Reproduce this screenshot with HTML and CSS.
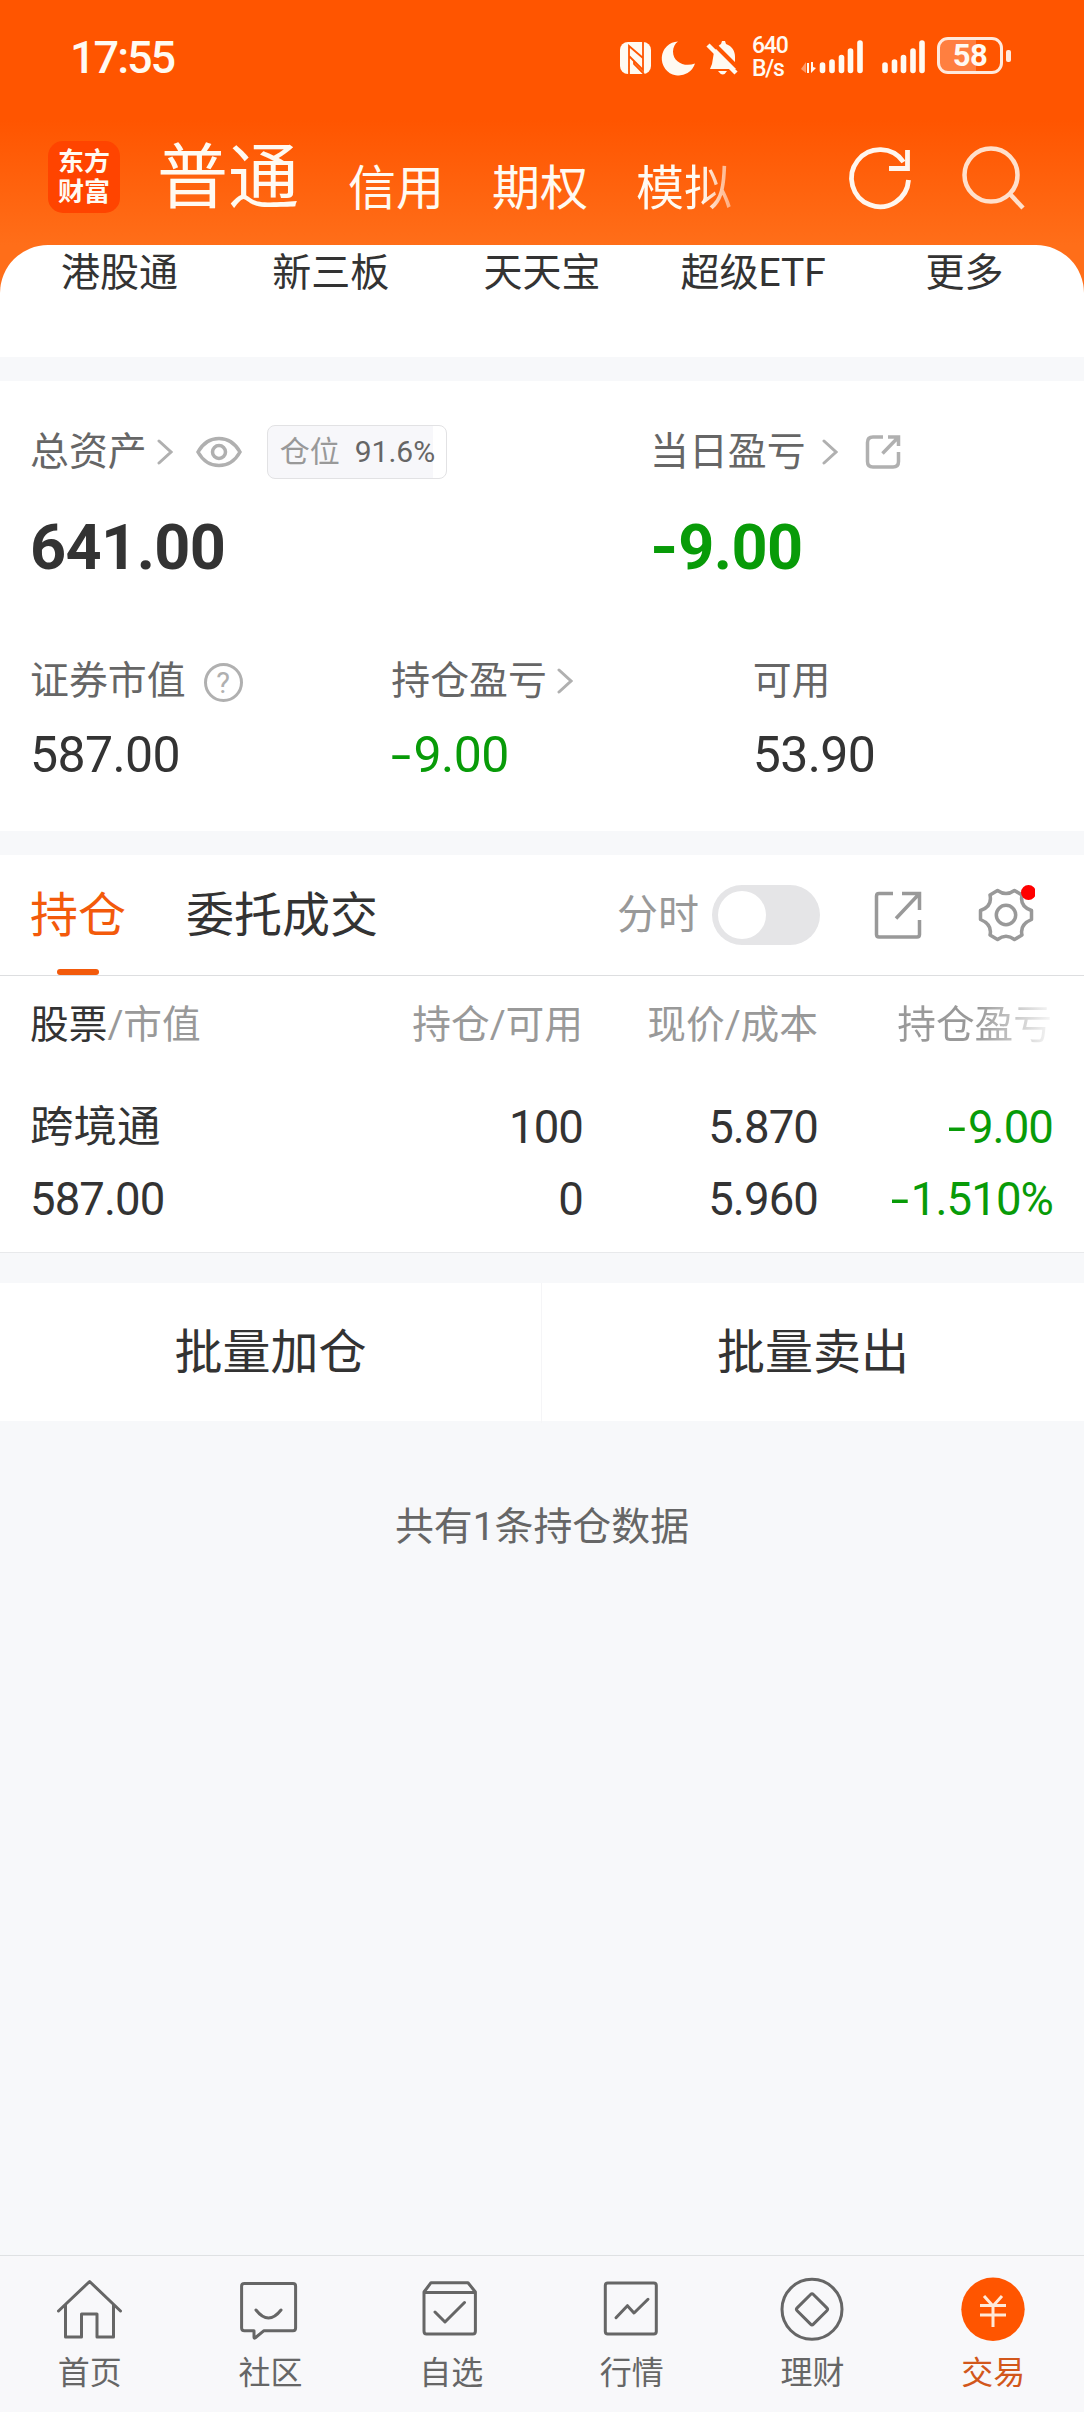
FILE: index.html
```html
<!DOCTYPE html>
<html lang="zh-CN">
<head>
    <meta charset="UTF-8">
    <meta name="viewport" content="width=device-width, initial-scale=1.0">
    <title>交易</title>
    <link rel="stylesheet" href="styles.css">
</head>
<body>

    <div class="top">
        <!-- Status bar -->
        <div class="status-bar">
            <span class="time">17:55</span>
            <svg class="status-icons" width="128" height="44" viewBox="616 34 128 44">
                <rect x="620" y="41" width="31" height="32" rx="8" fill="#fffaf2"/>
                <path d="M629 73V45l14 12M643 41v28L629 55M634 60v3l10 10" fill="none" stroke="#ff5500" stroke-width="1.8"/>
                <path d="M678 40.500a17 17 0 1 0 17 22c-10 4-22-1-22-12 0-4 2-8 5-10z" fill="#fffaf2"/>
                <path d="M714 51c3-5 5-7 7-8l1-3h3l1 3c6 2 9 7 9 13v8l2 4h-27l2-5z" fill="#fffaf2"/>
                <path d="M718 70h9q-4 7-9 0z" fill="#fffaf2"/>
                <path d="M712 41l27 27" stroke="#ff5500" stroke-width="4"/>
                <path d="M708 44l28 28" stroke="#fffaf2" stroke-width="4.500"/>
            </svg>
            <span class="net-speed"><span>640</span><span>B/s</span></span>
            <svg class="signal" width="130" height="44" viewBox="798 34 130 44">
                <path d="M801 68l5-7v11" fill="#ff9a68"/>
                <path d="M809 62v10h-2V62zM811 61v11l5-5-3-1v-5z" fill="#fffaf2"/>
                <g stroke="#fffaf2" stroke-width="5.600" stroke-linecap="round">
                    <path d="M822.500 64v5.500M832 61v8.500M841.500 56.500v13M850.500 50v19.500M860 42v27.500"/>
                    <path d="M885 64v5.500M894.500 61v8.500M903.500 56.500v13M913 50v19.500M922 42v27.500"/>
                </g>
            </svg>
            <div class="battery"><span>58</span></div>
        </div>

        <!-- Account tabs -->
        <div class="account-bar">
            <div class="logo">东方<br>财富</div>
            <div class="account-tabs">
                <span class="active">普通</span>
                <span>信用</span>
                <span>期权</span>
                <span class="fade-tab">模拟</span>
            </div>
            <svg class="bar-icons" width="190" height="70" viewBox="846 143 190 70" fill="none">
                <path d="M908.500 179a28.500 28.500 0 1 1-5-18" stroke="#fff6ee" stroke-width="4.800"/>
                <path d="M907.500 149v18.500H889" stroke="#fff6ee" stroke-width="4.800"/>
                <circle cx="991" cy="174" r="26.500" stroke="#ffe0cc" stroke-width="4.500"/>
                <path d="M1009 192l14 15" stroke="#ffe0cc" stroke-width="4.500"/>
            </svg>
        </div>

        <div class="quick-links">
            <span>港股通</span>
            <span>新三板</span>
            <span>天天宝</span>
            <span>超级ETF</span>
            <span>更多</span>
        </div>
    </div>

    <!-- Assets -->
    <div class="assets">
        <div class="totals">
            <div class="total">
                <div class="label">
                    <span>总资产</span>
                    <svg class="chevron" width="16" height="28" viewBox="0 0 16 28"><path d="M2 3l12 11L2 25"/></svg>
                    <svg class="eye" width="46" height="32" viewBox="0 0 46 32"><path d="M2 16C12-2 34-2 44 16 34 34 12 34 2 16z"/><circle cx="23" cy="16" r="6.500"/></svg>
                    <span class="position-tag"><em>仓位</em>91.6%</span>
                </div>
                <div class="big">641.00</div>
            </div>
            <div class="today">
                <div class="label">
                    <span>当日盈亏</span>
                    <svg class="chevron" width="16" height="28" viewBox="0 0 16 28"><path d="M2 3l12 11L2 25"/></svg>
                    <svg class="share" width="36" height="36" viewBox="0 0 36 36"><path d="M18 3H8Q2.500 3 2.500 8.500v19Q2.500 33 8 33h20q5.500 0 5.500-5.500V18M23 3h10.500v9M33 3.500L17.500 19.500"/></svg>
                </div>
                <div class="big green"><span class="minus">-</span>9.00</div>
            </div>
        </div>
        <div class="details">
            <div>
                <div class="label">
                    <span>证券市值</span>
                    <i class="help">?</i>
                </div>
                <div class="value">587.00</div>
            </div>
            <div>
                <div class="label">
                    <span>持仓盈亏</span>
                    <svg class="chevron" width="16" height="28" viewBox="0 0 16 28"><path d="M2 3l12 11L2 25"/></svg>
                </div>
                <div class="value green"><span class="minus">-</span>9.00</div>
            </div>
            <div>
                <div class="label"><span>可用</span></div>
                <div class="value">53.90</div>
            </div>
        </div>
    </div>

    <!-- Holdings -->
    <div class="holdings">
        <div class="tabs">
            <span class="tab active">持仓</span>
            <span class="tab">委托成交</span>
            <span class="switch-label">分时</span>
            <span class="switch"></span>
            <svg class="open-icon" width="48" height="48" viewBox="0 0 48 48"><path d="M19 2.500H5Q2.500 2.500 2.500 5v38.500Q2.500 46 5 46h38q2.500 0 2.500-2.500V29M28 2.500h17.500V19M45 3L22 27.500"/></svg>
            <svg class="gear" width="58" height="60" viewBox="977 884 58 60">
                <path d="M997.500 890.500q8.500 6 17 0l7.500 4.500q-2.500 11.500 9.500 15.500v9q-12 5-9.500 15.500l-7.500 4.500q-8.500-6.500-17 0l-7.500-4.500q2.500-10.500-9.500-15.500v-9q12-4 9.500-15.500z"/>
                <circle cx="1006" cy="915" r="9.700"/>
                <circle class="dot" cx="1028.500" cy="892.500" r="7.500"/>
            </svg>
        </div>
        <div class="row row-head">
            <span><b>股票</b>/市值</span>
            <span>持仓/可用</span>
            <span>现价/成本</span>
            <span class="fade-col">持仓盈亏</span>
        </div>
        <div class="row">
            <span class="name">跨境通</span>
            <span>100</span>
            <span>5.870</span>
            <span class="green"><span class="minus">-</span>9.00</span>
        </div>
        <div class="row">
            <span>587.00</span>
            <span>0</span>
            <span>5.960</span>
            <span class="green"><span class="minus">-</span>1.510%</span>
        </div>
    </div>

    <div class="batch">
        <span>批量加仓</span>
        <span>批量卖出</span>
    </div>

    <div class="note">共有1条持仓数据</div>

    <!-- Bottom navigation -->
    <div class="nav">
        <div class="nav-item">
            <svg width="66" height="66" viewBox="0 0 66 66"><path d="M1.500 35L32.600 5.500 63.500 35M8.500 29v32h16V38H40v23h16.500V29"/></svg>
            首页
        </div>
        <div class="nav-item">
            <svg width="66" height="66" viewBox="0 0 66 66"><path d="M7.500 7.500h48.500q2.600 0 2.600 2.500v42q0 2.700-2.600 2.700H27L18 62q-1 .5-1-1v-6.300H7.500q-2.900 0-2.900-2.700V10q0-2.500 2.900-2.500zM19 34q12.500 16 25 0"/></svg>
            社区
        </div>
        <div class="nav-item">
            <svg width="66" height="66" viewBox="0 0 66 66"><path d="M6 16l7-9.300h37l7.400 9.300v39q0 3-2.500 3H8.500Q6 58 6 55zM6 16.500h51.400M17 36l10 10 19.500-19.500"/></svg>
            自选
        </div>
        <div class="nav-item">
            <svg width="66" height="66" viewBox="0 0 66 66"><rect x="6.300" y="7" width="51" height="51" rx="2.500"/><path d="M17 41.700l11.400-12 6.600 7.300 14-13.700"/></svg>
            行情
        </div>
        <div class="nav-item">
            <svg width="66" height="66" viewBox="0 0 66 66"><circle cx="33" cy="33.300" r="30"/><rect x="21.500" y="21.800" width="23" height="23" rx="2" transform="rotate(45 33 33.300)"/></svg>
            理财
        </div>
        <div class="nav-item active">
            <svg width="66" height="66" viewBox="0 0 66 66"><circle class="coin" cx="33" cy="33.300" r="31.700"/><path class="yen" d="M24 20l9 10 9-10M20 29.500h26M20 39h26M33 29v22"/></svg>
            交易
        </div>
    </div>

</body>
</html>
```

FILE: styles.css
```css
/* General Styles */
* {
    box-sizing: border-box;
}

body {
    display: flex;
    flex-direction: column;
    margin: 0;
    width: 1084px;
    height: 2412px;
    overflow: hidden;
    font-family: Roboto, "Noto Sans CJK SC", sans-serif;
    background: #f7f8fa;
    color: #333;
}

svg {
    flex: none;
    fill: none;
}

/* Top area */
.top {
    height: 357px;
    background: linear-gradient(#ff5500 120px, #ff6e19 245px);
}

.status-bar {
    display: flex;
    align-items: center;
    height: 114px;
    padding-left: 70px;
    color: #fffaf2;
}

.time {
    width: 546px;
    padding-top: 2px;
    font-size: 45px;
    font-weight: 500;
    line-height: 50px;
    letter-spacing: -2px;
}

.net-speed {
    display: flex;
    flex-direction: column;
    width: 54px;
    padding-left: 8px;
    font-size: 23px;
    font-weight: 500;
    line-height: 23px;
    letter-spacing: -1.2px;
}

.battery {
    position: relative;
    width: 66px;
    height: 37px;
    margin: -3px 0 0 9px;
    border: 3px solid #ffe9dc;
    border-radius: 11px;
    background: linear-gradient(90deg, #ff7f40 36px, transparent 36px);
    font-size: 31px;
    font-weight: 700;
    line-height: 32px;
    letter-spacing: -0.5px;
    text-align: center;
}

.battery::after {
    content: "";
    position: absolute;
    right: -11px;
    top: 10px;
    width: 5px;
    height: 12px;
    border-radius: 2px;
    background: #ffe9dc;
}

/* Account bar */
.account-bar {
    display: flex;
    height: 131px;
    padding: 27px 48px 0;
    color: #fffaf2;
}

.logo {
    width: 72px;
    height: 72px;
    padding-top: 6px;
    border-radius: 15px;
    background: #ff4400;
    font-size: 26px;
    font-weight: 700;
    line-height: 30px;
    text-align: center;
}

.account-tabs {
    display: flex;
    align-items: flex-start;
    width: 688px;
    margin-left: 37px;
    font-size: 48px;
    line-height: 72px;
}

.account-tabs span {
    margin-top: 12px;
    margin-right: 48px;
}

.account-tabs .active {
    margin-top: 1px;
    margin-right: 49px;
    font-size: 71px;
}

.fade-tab {
    background: linear-gradient(90deg, #fffaf2 68%, #ffa878 100%);
    background-clip: text;
    color: transparent;
}

.bar-icons {
    margin-top: 3px;
    margin-left: 1px;
}

.quick-links {
    display: grid;
    grid-template-columns: repeat(5, 1fr);
    height: 112px;
    padding: 4px 14px 0;
    border-radius: 48px 48px 0 0;
    background: #fff;
    font-size: 39px;
    line-height: 48px;
    text-align: center;
}

/* Assets */
.assets {
    height: 450px;
    margin-top: 24px;
    padding-top: 42px;
    background: #fff;
}

.totals {
    display: flex;
    height: 229px;
}

.total {
    width: 650px;
    padding-left: 30px;
}

.label {
    display: flex;
    align-items: center;
    height: 58px;
    font-size: 38.9px;
    line-height: 58px;
    color: #666;
}

.label > span:first-child {
    height: 58px;
    margin-top: 0;
}

.chevron {
    margin-left: 10px;
    stroke: #b0b0b0;
    stroke-width: 3;
    stroke-linecap: round;
}

.today .chevron {
    margin-left: 16px;
}

.eye {
    margin-left: 23px;
    stroke: #b0b0b0;
    stroke-width: 3.5;
}

.share {
    margin-left: 27px;
    stroke: #b0b0b0;
    stroke-width: 3.5;
}

.position-tag {
    width: 180px;
    height: 54px;
    margin-left: 25px;
    padding-left: 12px;
    border: 1px solid #e2e2e4;
    border-radius: 8px;
    background: linear-gradient(90deg, #f7f7fa 165px, #fff 165px);
    font-size: 30px;
    line-height: 52px;
    white-space: nowrap;
}

.position-tag em {
    margin-right: 15px;
    font-style: normal;
    color: #999;
}

.big {
    margin-top: 29px;
    font-size: 63px;
    font-weight: 700;
    line-height: 76px;
    letter-spacing: -0.6px;
}

.green {
    color: #089b08;
}

/* wide minus sign */
.minus {
    display: inline-block;
    transform: scaleX(1.45);
    transform-origin: left;
    margin-right: 9px;
}

.big .minus {
    transform: scaleX(1.15);
    margin-right: 4px;
}

.row .minus {
    transform-origin: right;
    margin-right: 3px;
}

.details {
    display: grid;
    grid-template-columns: repeat(3, 1fr);
}

.details > div {
    padding-left: 30px;
}

.value {
    margin-top: 15px;
    font-size: 50px;
    line-height: 60px;
    letter-spacing: -0.6px;
}

.help {
    width: 39px;
    height: 39px;
    margin-top: 2px;
    margin-left: 18px;
    border: 3px solid #b0b0b0;
    border-radius: 50%;
    font-size: 29px;
    font-style: normal;
    line-height: 34px;
    text-align: center;
    color: #b0b0b0;
}

/* Holdings */
.holdings {
    height: 398px;
    margin-top: 24px;
    border-bottom: 1px solid #e8e9eb;
    background: #fff;
}

.tabs {
    display: flex;
    align-items: center;
    height: 121px;
    padding-left: 30px;
    border-bottom: 1px solid #dddee0;
}

.tab {
    position: relative;
    margin-right: 60px;
    padding-top: 1px;
    font-size: 48px;
    line-height: 119px;
}

.tab.active {
    color: #f35a0b;
}

.tab.active::after {
    content: "";
    position: absolute;
    left: 27px;
    bottom: 0;
    width: 42px;
    height: 6px;
    border-radius: 3px;
    background: #f35a0b;
}

.switch-label {
    width: 84px;
    margin-left: auto;
    font-size: 41px;
    line-height: 120px;
    color: #999;
}

.switch {
    width: 108px;
    height: 60px;
    margin-left: 11px;
    padding: 6px;
    border-radius: 30px;
    background: #e5e5e7;
}

.switch::before {
    content: "";
    display: block;
    width: 48px;
    height: 48px;
    border-radius: 50%;
    background: #fff;
}

.open-icon {
    margin-left: 54px;
    stroke: #999;
    stroke-width: 3.5;
}

.gear {
    margin: 0 49px 2px 55px;
    stroke: #999;
    stroke-width: 3.5;
    stroke-linejoin: round;
}

.gear .dot {
    fill: #f00;
    stroke: none;
}

.row {
    display: grid;
    grid-template-columns: 318px 235px 235px 235px;
    height: 72px;
    padding-left: 30px;
    font-size: 45.5px;
    line-height: 74px;
    letter-spacing: -0.9px;
    text-align: right;
}

.row span:first-child {
    text-align: left;
}

.row .name {
    font-size: 43.5px;
    letter-spacing: 0;
}

.row-head {
    height: 115px;
    font-size: 38.7px;
    line-height: 98px;
    letter-spacing: 0;
}

.row-head span {
    color: #999;
}

.row-head b {
    font-weight: 400;
    color: #333;
}

.row-head .fade-col {
    padding-right: 1px;
    background: linear-gradient(90deg, #999 68%, #fff 102%);
    background-clip: text;
    color: transparent;
}

/* Batch buttons */
.batch {
    display: grid;
    grid-template-columns: 1fr 1fr;
    height: 138px;
    margin-top: 30px;
    background: #fff;
    font-size: 48px;
    line-height: 140px;
    text-align: center;
}

.batch span:first-child {
    border-right: 1px solid #f5f5f7;
}

.note {
    margin-top: 76px;
    font-size: 38.9px;
    line-height: 60px;
    text-align: center;
    color: #666;
}

/* Bottom navigation */
.nav {
    display: grid;
    grid-template-columns: repeat(6, 1fr);
    height: 157px;
    margin-top: auto;
    border-top: 1px solid #dfe1e3;
    background: #f8f8fa;
}

.nav-item {
    display: flex;
    flex-direction: column;
    align-items: center;
    padding-top: 20px;
    padding-right: 1px;
    font-size: 32px;
    line-height: 62px;
    color: #666;
}

.nav-item svg {
    stroke: #666;
    stroke-width: 3;
    stroke-linecap: round;
    stroke-linejoin: round;
}

.nav-item.active {
    color: #d2571b;
}

.nav-item .coin {
    fill: #ff5500;
    stroke: none;
}

.nav-item .yen {
    stroke: #ffe9d8;
    stroke-linecap: butt;
}
```
